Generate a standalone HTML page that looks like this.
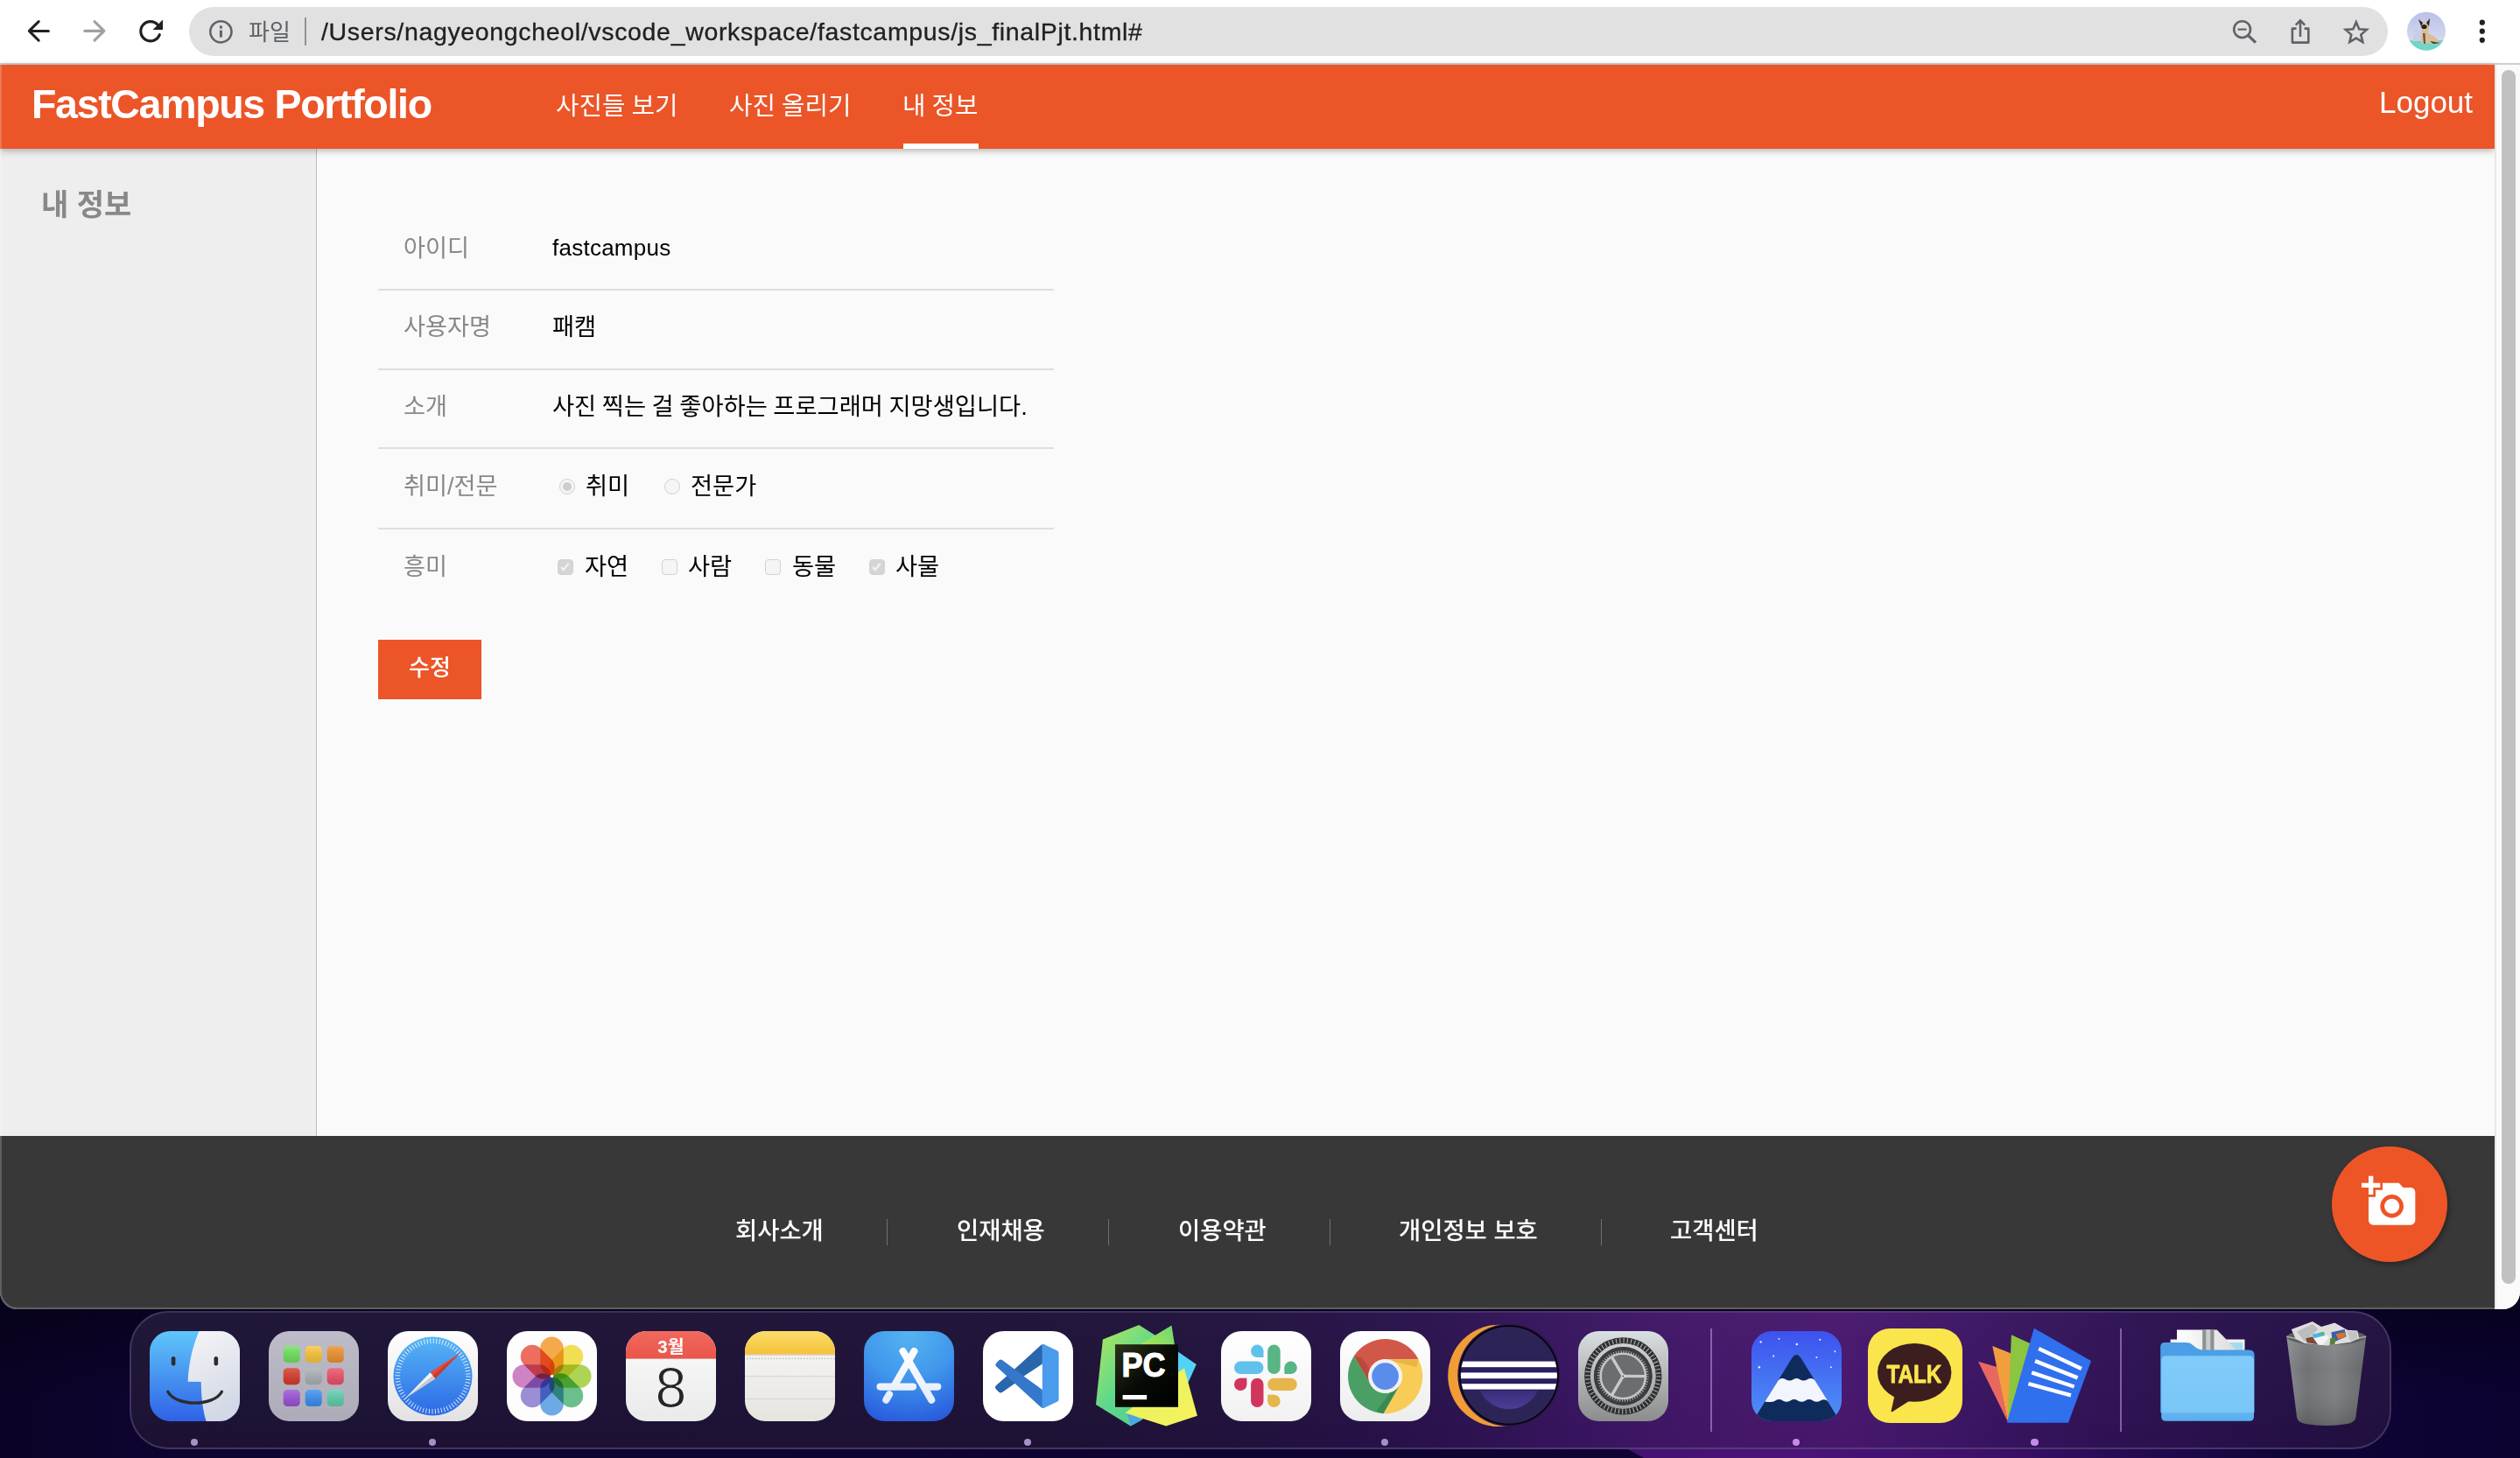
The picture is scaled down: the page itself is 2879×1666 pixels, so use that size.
<!DOCTYPE html>
<html lang="ko">
<head>
<meta charset="utf-8">
<title>FastCampus Portfolio</title>
<style>
*{box-sizing:border-box;margin:0;padding:0}
html,body{width:2879px;height:1666px;overflow:hidden}
body{position:relative;background:#0c0428;font-family:"Liberation Sans","Noto Sans CJK KR",sans-serif;color:#000}
.abs{position:absolute}
/* desktop */
#desk{left:0;top:0;width:2879px;height:1666px;
 background:
  linear-gradient(180deg,rgba(4,1,18,.55) 1496px,rgba(4,1,18,0) 1600px),
  linear-gradient(90deg,#0b0326 0%,#0e0430 6%,#0f0432 60%,#0e0436 93%,#0b0230 100%);}
#strip{left:1858px;top:1655px;width:760px;height:11px;background:linear-gradient(90deg,#45126f 0%,#4a1478 25%,#3c1068 55%,#1c0848 85%,rgba(14,4,54,0) 100%);clip-path:polygon(0 0,100% 0,100% 100%,20px 100%)}
/* window */
#win{left:0;top:0;width:2879px;height:1496px;background:#fff;border-radius:0 0 20px 20px;overflow:hidden}
#tb{left:0;top:0;width:2879px;height:74px;background:#fff;border-bottom:2px solid #cdd0d2}
#pill{left:216px;top:8px;width:2512px;height:56px;border-radius:28px;background:#e1e1e1}
#url{left:367px;top:8px;height:56px;line-height:56px;font-size:28.5px;color:#202124;white-space:nowrap;letter-spacing:0.66px;-webkit-text-stroke:.3px #202124}
#file{left:284px;top:8px;height:56px;line-height:59px;font-size:26px;color:#5f6368;white-space:nowrap}
#sep{left:348px;top:20px;width:2px;height:32px;background:#929292}
/* page */
#hdr{left:0;top:74px;width:2850px;height:96px;background:#eb5528;box-shadow:0 2px 8px rgba(0,0,0,.3);z-index:3}
#logo{left:36px;top:0;height:96px;line-height:90px;font-size:46.5px;letter-spacing:-1.32px;font-weight:700;color:#fff;white-space:nowrap}
.nav{top:0;height:96px;line-height:95px;font-size:28.8px;word-spacing:-1px;color:#fff;white-space:nowrap}
#ul{left:1032px;top:90px;width:86px;height:6px;background:#fff}
#logout{left:2718px;top:0;height:96px;line-height:86px;font-size:35px;color:#fff;white-space:nowrap}
#side{left:0;top:170px;width:362px;height:1128px;background:#eee;border-right:1px solid #bdbdbd}
#sidet{left:47px;top:211px;font-size:34px;font-weight:700;color:#888;white-space:nowrap;line-height:46px}
#main{left:362px;top:170px;width:2488px;height:1128px;background:#fafafa}
.row{left:432px;width:772px;height:2px;background:#dedede}
.lab{left:461px;font-size:27.2px;color:#888;white-space:nowrap;line-height:40px;height:40px}
.val{left:631px;font-size:27.3px;word-spacing:-1px;color:#000;white-space:nowrap;line-height:40px;height:40px}
.opt{font-size:27.3px;color:#000;white-space:nowrap;line-height:40px;height:40px}
.cb{width:18px;height:18px;border-radius:4px;border:1.5px solid #d2d2d2;background:#f5f5f5}
.cb.on{background:#d5d5d5;border-color:#d3d3d3}
.rd{width:18px;height:18px;border-radius:50%;border:1.5px solid #d0d0d0;background:#f5f5f5}
.rd.on::after{content:"";position:absolute;left:2.5px;top:2.5px;width:10px;height:10px;border-radius:50%;background:#cdcdcd}
#btn{left:432px;top:731px;width:118px;height:68px;background:#eb5528;color:#fff;font-size:26px;font-weight:500;text-align:center;line-height:64px}
#ftr{left:0;top:1298px;width:2850px;height:198px;background:#383838}
.fl{top:1387px;height:40px;line-height:40px;font-size:27.4px;font-weight:500;color:#fff;white-space:nowrap}
.fs{top:1393px;width:1px;height:30px;background:#707070}
#fab{left:2664px;top:1310px;width:132px;height:132px;border-radius:50%;background:#ee5526;box-shadow:2px 3px 6px rgba(0,0,0,.32)}
#sb{left:2850px;top:74px;width:29px;height:1422px;background:#fafafa;border-left:2px solid #e8e8e8;z-index:4}
#thumb{left:2858px;top:80px;width:16px;height:1387px;border-radius:8px;background:#c1c1c1;z-index:5}
#winb{left:0;top:74px;width:2879px;height:1422px;border-radius:0 0 20px 20px;border:2px solid rgba(255,255,255,.2);border-top:none;border-right:none;z-index:9;pointer-events:none}
/* dock */
#dock{left:148px;top:1498px;width:2584px;height:158px;border-radius:44px;border:2px solid rgba(112,102,142,.4);
 background:linear-gradient(180deg,rgba(255,255,255,.02),rgba(0,0,0,.03)),linear-gradient(90deg,#1d1235 0%,#1e1236 40%,#22123f 50%,#2b124f 58%,#391561 64%,#44176a 70%,#48186f 76%,#3b1564 82%,#2f1254 88%,#27114a 94%,#21103f 100%)}
.ic{top:1521px;width:103px;height:103px;border-radius:24px;overflow:hidden}
.dot{top:1644px;width:8px;height:8px;border-radius:50%;background:#a594c8}
.dsep{top:1518px;width:2px;height:118px;background:rgba(190,140,225,.6)}
</style>
</head>
<body>
<div id="desk" class="abs"></div><div id="strip" class="abs"></div>
<div id="win" class="abs">
 <div id="tb" class="abs"></div>
 <div id="pill" class="abs"></div>
 <div id="file" class="abs">파일</div>
 <div id="sep" class="abs"></div>
 <div id="url" class="abs">/Users/nagyeongcheol/vscode_workspace/fastcampus/js_finalPjt.html#</div>
 <svg class="abs" style="left:0;top:0" width="2879" height="73" viewBox="0 0 2879 73" fill="none">
  <g stroke="#1f2023" stroke-width="3" stroke-linecap="round" stroke-linejoin="round">
   <path d="M55.4 35.4H33.6M44.2 24.6L33.3 35.4L44.2 46.2"/>
  </g>
  <g stroke="#a0a0a0" stroke-width="3.1" stroke-linecap="round" stroke-linejoin="round">
   <path d="M96.8 35.4H118.6M108 24.6L118.9 35.4L108 46.2"/>
  </g>
  <path d="M180.4 28.6A11.1 11.1 0 1 0 182.3 39.6" stroke="#1f2023" stroke-width="3.1" stroke-linecap="round"/>
  <path d="M186 22.6V34H174.6Z" fill="#1f2023"/>
  <circle cx="252.4" cy="36.3" r="12.1" stroke="#5f6368" stroke-width="2.5"/>
  <rect x="250.9" y="34.6" width="3" height="8" fill="#5f6368"/>
  <rect x="250.9" y="29.4" width="3" height="3.2" fill="#5f6368"/>
  <g stroke="#5f6368" stroke-width="2.6" stroke-linecap="butt">
   <circle cx="2561.6" cy="33.6" r="9.4"/>
   <path d="M2568.6 40.6L2577 48.6" stroke-width="3.2"/>
   <path d="M2556.6 33.6H2566.6" stroke-width="2.2"/>
   <path d="M2623.6 32.6H2618.9V48.6H2637.3V32.6H2632.6" stroke-linejoin="round"/>
   <path d="M2628 42V24M2622.8 28.6L2628 23.4L2633.2 28.6" stroke-linejoin="miter"/>
   <path d="M2691.8 25.2L2695.2 33.2L2703.9 33.9L2697.3 39.6L2699.3 48.1L2691.8 43.6L2684.3 48.1L2686.3 39.6L2679.7 33.9L2688.4 33.2Z" stroke-linejoin="miter"/>
  </g>
  <circle cx="2835.8" cy="25.7" r="3.1" fill="#1f2023"/>
  <circle cx="2835.8" cy="35.7" r="3.1" fill="#1f2023"/>
  <circle cx="2835.8" cy="45.8" r="3.1" fill="#1f2023"/>
  <defs><clipPath id="avc"><circle cx="2772" cy="35.7" r="22"/></clipPath>
  <linearGradient id="avg" x1="0" y1="0" x2="0" y2="1"><stop offset="0" stop-color="#b9c0e6"/><stop offset="1" stop-color="#dfe3f4"/></linearGradient></defs>
  <g clip-path="url(#avc)">
   <rect x="2750" y="13" width="44" height="46" fill="url(#avg)"/>
   <rect x="2750" y="46" width="44" height="14" fill="#6fd6c8"/>
   <path d="M2756 47L2760 33L2766 38L2767 47Z" fill="#c9cde0"/>
   <path d="M2766 50L2767 30L2763 22L2768 26L2772 26L2776 21L2775 30L2774 38L2782 42L2788 49Z" fill="#d9bf98"/>
   <path d="M2763 22L2768 26L2766 30ZM2776 21L2772 26L2775 30Z" fill="#2a2320"/>
   <ellipse cx="2769.5" cy="30.5" rx="3.2" ry="2.6" fill="#2a2320"/>
   <path d="M2768 38L2769 50L2771 50L2770.5 38Z" fill="#6b5038"/>
   <path d="M2776 47L2788 49L2780 50Z" fill="#4a3528"/>
  </g>
 </svg>

 <div id="side" class="abs"></div>
 <div id="main" class="abs"></div>
 <div id="sidet" class="abs">내 정보</div>

 <div id="hdr" class="abs">
  <div id="logo" class="abs">FastCampus Portfolio</div>
  <div class="abs nav" style="left:635px">사진들 보기</div>
  <div class="abs nav" style="left:833px">사진 올리기</div>
  <div class="abs nav" style="left:1031px">내 정보</div>
  <div id="ul" class="abs"></div>
  <div id="logout" class="abs">Logout</div>
 </div>

 <!-- FORM -->
 <div class="abs lab" style="top:264px">아이디</div>
 <div class="abs val" style="top:263px;font-size:26px;letter-spacing:0.25px">fastcampus</div>
 <div class="abs row" style="top:330px"></div>
 <div class="abs lab" style="top:354px">사용자명</div>
 <div class="abs val" style="top:354px">패캠</div>
 <div class="abs row" style="top:421px"></div>
 <div class="abs lab" style="top:445px">소개</div>
 <div class="abs val" style="top:445px">사진 찍는 걸 좋아하는 프로그래머 지망생입니다.</div>
 <div class="abs row" style="top:511px"></div>
 <div class="abs lab" style="top:536px">취미/전문</div>
 <div class="abs rd on" style="left:639px;top:547px"></div>
 <div class="abs opt" style="left:669px;top:536px">취미</div>
 <div class="abs rd" style="left:759px;top:547px"></div>
 <div class="abs opt" style="left:789px;top:536px">전문가</div>
 <div class="abs row" style="top:603px"></div>
 <div class="abs lab" style="top:628px">흥미</div>
 <div class="abs cb on" style="left:637px;top:639px"><svg width="15" height="15" viewBox="0 0 15 15" style="display:block"><path d="M3 8.2L6 11L11.6 3.8" fill="none" stroke="#f2f2f2" stroke-width="2.4"/></svg></div>
 <div class="abs opt" style="left:668px;top:628px">자연</div>
 <div class="abs cb" style="left:756px;top:639px"></div>
 <div class="abs opt" style="left:786px;top:628px">사람</div>
 <div class="abs cb" style="left:874px;top:639px"></div>
 <div class="abs opt" style="left:905px;top:628px">동물</div>
 <div class="abs cb on" style="left:993px;top:639px"><svg width="15" height="15" viewBox="0 0 15 15" style="display:block"><path d="M3 8.2L6 11L11.6 3.8" fill="none" stroke="#f2f2f2" stroke-width="2.4"/></svg></div>
 <div class="abs opt" style="left:1023px;top:628px">사물</div>
 <div id="btn" class="abs">수정</div>

 <div id="ftr" class="abs"></div>
 <div class="abs fl" style="left:840px">회사소개</div>
 <div class="abs fs" style="left:1013px"></div>
 <div class="abs fl" style="left:1093px">인재채용</div>
 <div class="abs fs" style="left:1266px"></div>
 <div class="abs fl" style="left:1346px">이용약관</div>
 <div class="abs fs" style="left:1519px"></div>
 <div class="abs fl" style="left:1598px">개인정보 보호</div>
 <div class="abs fs" style="left:1829px"></div>
 <div class="abs fl" style="left:1908px">고객센터</div>
 <div id="fab" class="abs"><svg class="abs" style="left:33.6px;top:31.3px" width="64" height="64" viewBox="0 0 24 24"><path fill="#fff" d="M3 4V1h2v3h3v2H5v3H3V6H0V4h3zm3 6V7h3V4h7l1.83 2H21c1.1 0 2 .9 2 2v12c0 1.1-.9 2-2 2H5c-1.1 0-2-.9-2-2V10h3zm7 9c2.76 0 5-2.24 5-5s-2.24-5-5-5-5 2.24-5 5 2.24 5 5 5zm-3.2-5c0 1.77 1.43 3.2 3.2 3.2s3.2-1.43 3.2-3.2-1.43-3.2-3.2-3.2-3.2 1.43-3.2 3.2z"/></svg></div>
 <div id="sb" class="abs"></div>
 <div id="thumb" class="abs"></div>
 <div id="winb" class="abs"></div>
</div>

<div id="dock" class="abs"></div>
<!-- DOCK-START -->
<svg width="0" height="0" style="position:absolute"><defs><clipPath id="sq"><rect width="103" height="103" rx="23.5"/></clipPath></defs></svg>
<svg class="abs" style="left:170.6px;top:1520.5px" width="103" height="103" viewBox="0 0 103 103" ><defs><linearGradient id="fb" x1="0" y1="0" x2="0" y2="1"><stop offset="0" stop-color="#5fc6fb"/><stop offset="1" stop-color="#2f61e6"/></linearGradient>
<linearGradient id="fw" x1="0" y1="0" x2="0.3" y2="1"><stop offset="0" stop-color="#f6f6f8"/><stop offset="1" stop-color="#d2d8e5"/></linearGradient></defs>
<g clip-path="url(#sq)"><rect width="103" height="103" fill="url(#fb)"/>
<path fill="url(#fw)" d="M56.5 0C49 17 44.5 37 43.6 57.8L58.8 58C58.6 75 61 92 64.6 103H103V0Z"/>
<rect x="24.8" y="29" width="4.6" height="10.6" rx="2.3" fill="#2c2c30"/><rect x="73.5" y="29" width="4.6" height="10.6" rx="2.3" fill="#2c2c30"/>
<path d="M20.8 69.2C30 86.4 73 86.4 82.4 69.2" stroke="#2c2c30" stroke-width="3.3" fill="none" stroke-linecap="round"/></g></svg>
<svg class="abs" style="left:306.6px;top:1520.5px" width="103" height="103" viewBox="0 0 103 103" ><defs><linearGradient id="lp" x1="0" y1="0" x2="0" y2="1"><stop offset="0" stop-color="#bfbcc9"/><stop offset="1" stop-color="#aeabb9"/></linearGradient><linearGradient id="lsh" x1="0" y1="0" x2="0" y2="1"><stop offset="0" stop-color="#fff" stop-opacity=".18"/><stop offset="1" stop-color="#000" stop-opacity=".12"/></linearGradient></defs><rect width="103" height="103" rx="23.5" fill="url(#lp)"/><rect x="16.7" y="17.1" width="19" height="19" rx="4.6" fill="#6fe35d"/><rect x="16.7" y="17.1" width="19" height="19" rx="4.6" fill="url(#lsh)"/><rect x="41.7" y="17.1" width="19" height="19" rx="4.6" fill="#fcc63b"/><rect x="41.7" y="17.1" width="19" height="19" rx="4.6" fill="url(#lsh)"/><rect x="66.7" y="17.1" width="19" height="19" rx="4.6" fill="#f0912d"/><rect x="66.7" y="17.1" width="19" height="19" rx="4.6" fill="url(#lsh)"/><rect x="16.7" y="42.2" width="19" height="19" rx="4.6" fill="#d83a2a"/><rect x="16.7" y="42.2" width="19" height="19" rx="4.6" fill="url(#lsh)"/><rect x="41.7" y="42.2" width="19" height="19" rx="4.6" fill="#aab1b6"/><rect x="41.7" y="42.2" width="19" height="19" rx="4.6" fill="url(#lsh)"/><rect x="66.7" y="42.2" width="19" height="19" rx="4.6" fill="#ef4f69"/><rect x="66.7" y="42.2" width="19" height="19" rx="4.6" fill="url(#lsh)"/><rect x="16.7" y="67.1" width="19" height="19" rx="4.6" fill="#9c50d9"/><rect x="16.7" y="67.1" width="19" height="19" rx="4.6" fill="url(#lsh)"/><rect x="41.7" y="67.1" width="19" height="19" rx="4.6" fill="#3a8ff3"/><rect x="41.7" y="67.1" width="19" height="19" rx="4.6" fill="url(#lsh)"/><rect x="66.7" y="67.1" width="19" height="19" rx="4.6" fill="#5ecfae"/><rect x="66.7" y="67.1" width="19" height="19" rx="4.6" fill="url(#lsh)"/></svg>
<svg class="abs" style="left:442.8px;top:1520.5px" width="103" height="103" viewBox="0 0 103 103" ><defs><linearGradient id="sw" x1="0" y1="0" x2="0" y2="1"><stop offset="0" stop-color="#fff"/><stop offset="1" stop-color="#e2e2e2"/></linearGradient>
<linearGradient id="sbl" x1="0" y1="0" x2="0" y2="1"><stop offset="0" stop-color="#56b6f6"/><stop offset="1" stop-color="#2c68e5"/></linearGradient></defs>
<rect width="103" height="103" rx="23.5" fill="url(#sw)"/><circle cx="51.5" cy="51.5" r="45" fill="url(#sbl)"/>
<circle cx="51.5" cy="51.5" r="40.2" fill="none" stroke="#fff" stroke-opacity=".9" stroke-width="5.6" stroke-dasharray="0.9 2.608"/>
<path d="M82.5 25L54.4 54.3L48.5 47.2Z" fill="#e8473a"/><path d="M20.3 76.6L48.5 47.2L54.4 54.3Z" fill="#f4f4f4"/><path d="M20.3 76.6L51.4 50.8L54.4 54.3Z" fill="#c9c9c9"/><path d="M82.5 25L51.4 50.8L54.4 54.3Z" fill="#c83a30"/></svg>
<svg class="abs" style="left:578.7px;top:1520.5px" width="103" height="103" viewBox="0 0 103 103" ><rect width="103" height="103" rx="23.5" fill="#fdfdfd"/><g style="mix-blend-mode:multiply"><rect x="38.2" y="6.5" width="26.6" height="44" rx="13.3" fill="#f5a033" fill-opacity=".88" transform="rotate(0 51.5 51.5)" style="mix-blend-mode:multiply"/><rect x="38.2" y="6.5" width="26.6" height="44" rx="13.3" fill="#f2dc3c" fill-opacity=".88" transform="rotate(45 51.5 51.5)" style="mix-blend-mode:multiply"/><rect x="38.2" y="6.5" width="26.6" height="44" rx="13.3" fill="#a5d040" fill-opacity=".88" transform="rotate(90 51.5 51.5)" style="mix-blend-mode:multiply"/><rect x="38.2" y="6.5" width="26.6" height="44" rx="13.3" fill="#57b87d" fill-opacity=".88" transform="rotate(135 51.5 51.5)" style="mix-blend-mode:multiply"/><rect x="38.2" y="6.5" width="26.6" height="44" rx="13.3" fill="#5a9fe3" fill-opacity=".88" transform="rotate(180 51.5 51.5)" style="mix-blend-mode:multiply"/><rect x="38.2" y="6.5" width="26.6" height="44" rx="13.3" fill="#8f80d2" fill-opacity=".88" transform="rotate(225 51.5 51.5)" style="mix-blend-mode:multiply"/><rect x="38.2" y="6.5" width="26.6" height="44" rx="13.3" fill="#c873be" fill-opacity=".88" transform="rotate(270 51.5 51.5)" style="mix-blend-mode:multiply"/><rect x="38.2" y="6.5" width="26.6" height="44" rx="13.3" fill="#ea5b4c" fill-opacity=".88" transform="rotate(315 51.5 51.5)" style="mix-blend-mode:multiply"/></g><circle cx="51.5" cy="51.5" r="1.6" fill="#fff"/></svg>
<svg class="abs" style="left:714.9px;top:1520.5px" width="103" height="103" viewBox="0 0 103 103" ><defs><linearGradient id="cw" x1="0" y1="0" x2="0" y2="1"><stop offset="0" stop-color="#fbfbfb"/><stop offset="1" stop-color="#eaeaea"/></linearGradient>
<linearGradient id="cr" x1="0" y1="0" x2="0" y2="1"><stop offset="0" stop-color="#f1695d"/><stop offset="1" stop-color="#e9554b"/></linearGradient></defs>
<g clip-path="url(#sq)"><rect width="103" height="103" fill="url(#cw)"/><rect width="103" height="31.6" fill="url(#cr)"/></g>
<text x="51.5" y="25.2" text-anchor="middle" font-family="'Liberation Sans','Noto Sans CJK KR',sans-serif" font-weight="700" font-size="20.5" fill="#fff">3월</text>
<text x="51.5" y="86.8" text-anchor="middle" font-family="'Liberation Sans','Noto Sans CJK KR',sans-serif" font-size="64.5" fill="#262626" stroke="#f2f2f2" stroke-width="1.1">8</text></svg>
<svg class="abs" style="left:850.7px;top:1520.5px" width="103" height="103" viewBox="0 0 103 103" ><defs><linearGradient id="ny" x1="0" y1="0" x2="0" y2="1"><stop offset="0" stop-color="#fbdd6c"/><stop offset="1" stop-color="#f6c137"/></linearGradient>
<linearGradient id="nw" x1="0" y1="0" x2="0" y2="1"><stop offset="0" stop-color="#f9f8f6"/><stop offset="1" stop-color="#e6e4df"/></linearGradient></defs>
<g clip-path="url(#sq)"><rect width="103" height="103" fill="url(#nw)"/><rect width="103" height="26.3" fill="url(#ny)"/><rect y="26.3" width="103" height="1.4" fill="#c8b98a" fill-opacity=".7"/><rect x="2.00" y="30.6" width="1.2" height="1.6" fill="#b9b7b4"/><rect x="5.43" y="30.6" width="1.2" height="1.6" fill="#b9b7b4"/><rect x="8.86" y="30.6" width="1.2" height="1.6" fill="#b9b7b4"/><rect x="12.29" y="30.6" width="1.2" height="1.6" fill="#b9b7b4"/><rect x="15.72" y="30.6" width="1.2" height="1.6" fill="#b9b7b4"/><rect x="19.15" y="30.6" width="1.2" height="1.6" fill="#b9b7b4"/><rect x="22.58" y="30.6" width="1.2" height="1.6" fill="#b9b7b4"/><rect x="26.01" y="30.6" width="1.2" height="1.6" fill="#b9b7b4"/><rect x="29.44" y="30.6" width="1.2" height="1.6" fill="#b9b7b4"/><rect x="32.87" y="30.6" width="1.2" height="1.6" fill="#b9b7b4"/><rect x="36.30" y="30.6" width="1.2" height="1.6" fill="#b9b7b4"/><rect x="39.73" y="30.6" width="1.2" height="1.6" fill="#b9b7b4"/><rect x="43.16" y="30.6" width="1.2" height="1.6" fill="#b9b7b4"/><rect x="46.59" y="30.6" width="1.2" height="1.6" fill="#b9b7b4"/><rect x="50.02" y="30.6" width="1.2" height="1.6" fill="#b9b7b4"/><rect x="53.45" y="30.6" width="1.2" height="1.6" fill="#b9b7b4"/><rect x="56.88" y="30.6" width="1.2" height="1.6" fill="#b9b7b4"/><rect x="60.31" y="30.6" width="1.2" height="1.6" fill="#b9b7b4"/><rect x="63.74" y="30.6" width="1.2" height="1.6" fill="#b9b7b4"/><rect x="67.17" y="30.6" width="1.2" height="1.6" fill="#b9b7b4"/><rect x="70.60" y="30.6" width="1.2" height="1.6" fill="#b9b7b4"/><rect x="74.03" y="30.6" width="1.2" height="1.6" fill="#b9b7b4"/><rect x="77.46" y="30.6" width="1.2" height="1.6" fill="#b9b7b4"/><rect x="80.89" y="30.6" width="1.2" height="1.6" fill="#b9b7b4"/><rect x="84.32" y="30.6" width="1.2" height="1.6" fill="#b9b7b4"/><rect x="87.75" y="30.6" width="1.2" height="1.6" fill="#b9b7b4"/><rect x="91.18" y="30.6" width="1.2" height="1.6" fill="#b9b7b4"/><rect x="94.61" y="30.6" width="1.2" height="1.6" fill="#b9b7b4"/><rect x="98.04" y="30.6" width="1.2" height="1.6" fill="#b9b7b4"/><rect x="101.47" y="30.6" width="1.2" height="1.6" fill="#b9b7b4"/>
<rect y="51.2" width="103" height="1.1" fill="#d5d3dc"/><rect y="77" width="103" height="1.1" fill="#d5d3dc"/></g></svg>
<svg class="abs" style="left:987px;top:1520.5px" width="103" height="103" viewBox="0 0 103 103" ><defs><radialGradient id="ab" cx=".5" cy="0" r="1.05"><stop offset="0" stop-color="#55b5f1"/><stop offset=".5" stop-color="#4097ec"/><stop offset="1" stop-color="#2859dd"/></radialGradient>
<linearGradient id="aw" gradientUnits="userSpaceOnUse" x1="0" y1="20" x2="0" y2="82"><stop offset="0" stop-color="#fff"/><stop offset="1" stop-color="#e3ecfb"/></linearGradient></defs>
<rect width="103" height="103" rx="23.5" fill="url(#ab)"/>
<g stroke="url(#aw)" stroke-width="8.2" stroke-linecap="round" fill="none"><path d="M44.6 23L77.2 78.6"/><path d="M72.5 63.6H84.2"/><path d="M57.4 23L34.2 63.2"/><path d="M18.6 63.6H56"/><path d="M29 72.2L25.4 78.6"/></g></svg>
<svg class="abs" style="left:1122.8px;top:1520.5px" width="103" height="103" viewBox="0 0 103 103" ><rect width="103" height="103" rx="23.5" fill="#fff"/>
<path d="M67.6 16.4L21.6 68.8Q19.6 70.8 17.6 68.8L14.9 66.1Q13.1 64.1 15.1 62.1L67.6 16.4V37.6L36 52L67.6 16.4Z" fill="#2a67ad"/>
<path d="M66.5 15.8Q68.5 14.8 70.5 15.8L67.6 38L21.9 70.1Q19.9 71.3 18.1 69.5L14.9 66.3Q13.3 64.3 15.3 62.5Z" fill="#2a66ac"/>
<path d="M15.3 40.5Q13.3 38.7 14.9 36.9L18.1 33.5Q19.9 31.9 21.9 33.1L67.6 66.8L70.5 87.2Q68.5 88.2 66.5 87.2Z" fill="#3578cb"/>
<path d="M67.6 15.2Q69 14.6 70.6 15.4L84.6 22.2Q86.6 23.2 86.6 25.6V77.4Q86.6 79.8 84.6 80.8L70.6 87.6Q69 88.4 67.6 87.8Z" fill="#4a9beb"/>
<path d="M67.6 37.8L46.6 51.5L67.6 66.6Z" fill="#fff"/></svg>
<svg class="abs" style="left:1251px;top:1513px" width="118" height="118" viewBox="0 0 118 118" ><defs><linearGradient id="pg1" x1="0" y1="0" x2="1" y2="1"><stop offset="0" stop-color="#b6e85a"/><stop offset=".45" stop-color="#5fd88c"/><stop offset="1" stop-color="#4fc38f"/></linearGradient>
<linearGradient id="pg2" x1="0" y1="1" x2="1" y2="0"><stop offset="0" stop-color="#cdea4c"/><stop offset="1" stop-color="#67d873"/></linearGradient>
<linearGradient id="pg3" x1="0" y1="0" x2="1" y2="1"><stop offset="0" stop-color="#e6f25c"/><stop offset="1" stop-color="#f6f25e"/></linearGradient>
<linearGradient id="pk" x1="0" y1="0" x2="1" y2="1"><stop offset="0" stop-color="#2b3218"/><stop offset=".5" stop-color="#070a05"/><stop offset="1" stop-color="#000"/></linearGradient></defs>
<path d="M8.9 17.4L50.2 1L70 13.4L95 40L95 70L53.4 109.4L40.7 116.6L1 92Z" fill="url(#pg1)"/>
<path d="M50 24L87.5 1.5L91 24L97 60L60 60Z" fill="url(#pg2)"/>
<path d="M94 31L115.8 46L106.6 66.6L94 62Z" fill="#52d3f6"/>
<path d="M40.7 116.6L53.4 109.4L36 100Z" fill="#4aa7e0"/>
<path d="M102 50.5L116.9 104.7L81.2 116.6L34.5 101.5L95 55Z" fill="url(#pg3)"/>
<rect x="23" y="23.2" width="72" height="71.6" fill="url(#pk)"/>
<text x="30.6" y="59.6" font-family="'Liberation Sans',sans-serif" font-weight="700" font-size="38" fill="#fff" stroke="#fff" stroke-width="1.1" textLength="50" lengthAdjust="spacingAndGlyphs">PC</text>
<rect x="31.6" y="81" width="27.6" height="5.2" fill="#fff"/></svg>
<svg class="abs" style="left:1394.9px;top:1520.5px" width="103" height="103" viewBox="0 0 103 103" ><defs><linearGradient id="slw" x1="0" y1="0" x2="0" y2="1"><stop offset="0" stop-color="#fff"/><stop offset="1" stop-color="#f1f1f1"/></linearGradient></defs><rect width="103" height="103" rx="23.5" fill="url(#slw)"/><rect x="34.1" y="15.6" width="14.4" height="14.4" rx="7.2" fill="#5fc1ec"/><rect x="41.300000000000004" y="22.8" width="7.2" height="7.2" fill="#5fc1ec"/><rect x="15" y="34.6" width="33.5" height="14.4" rx="7.2" fill="#5fc1ec"/><rect x="53.2" y="15.6" width="14.5" height="33.4" rx="7.25" fill="#58b584"/><rect x="72.4" y="34.6" width="14.4" height="14.4" rx="7.2" fill="#58b584"/><rect x="72.4" y="41.800000000000004" width="7.2" height="7.2" fill="#58b584"/><rect x="15" y="53.7" width="14.4" height="14.4" rx="7.2" fill="#d1355d"/><rect x="22.2" y="53.7" width="7.2" height="7.2" fill="#d1355d"/><rect x="34.1" y="53.7" width="14.4" height="33.4" rx="7.2" fill="#d1355d"/><rect x="53.2" y="53.7" width="33.6" height="14.4" rx="7.2" fill="#e6b54b"/><rect x="53.2" y="72.7" width="14.4" height="14.4" rx="7.2" fill="#e6b54b"/><rect x="53.2" y="72.7" width="7.2" height="7.2" fill="#e6b54b"/></svg>
<svg class="abs" style="left:1530.7px;top:1520.5px" width="103" height="103" viewBox="0 0 103 103" ><defs><linearGradient id="chw" x1="0" y1="0" x2="0" y2="1"><stop offset="0" stop-color="#fff"/><stop offset="1" stop-color="#ededed"/></linearGradient>
<linearGradient id="chs1" x1="0" y1="0" x2="1" y2="0"><stop offset="0" stop-color="#000" stop-opacity=".22"/><stop offset="1" stop-color="#000" stop-opacity="0"/></linearGradient></defs>
<rect width="103" height="103" rx="23.5" fill="url(#chw)"/>
<path d="M51.60 32.20L89.53 32.20A42.6 42.6 0 0 0 15.84 28.45L34.80 61.30A19.4 19.4 0 0 1 51.60 32.20Z" fill="#d15849"/><path d="M68.40 61.30L49.44 94.15A42.6 42.6 0 0 0 89.53 32.20L51.60 32.20A19.4 19.4 0 0 1 68.40 61.30Z" fill="#f8cc56"/><path d="M34.80 61.30L15.84 28.45A42.6 42.6 0 0 0 49.44 94.15L68.40 61.30A19.4 19.4 0 0 1 34.80 61.30Z" fill="#4aa064"/>
<path d="M34.80 61.30L15.84 28.45L24.84 30.45L41.80 55.30Z" fill="#8a2f22" fill-opacity=".35"/>
<path d="M51.60 32.20L89.53 32.20L87.53 41.20L63.60 35.20Z" fill="#c98a1e" fill-opacity=".32"/>
<path d="M68.40 61.30L49.44 94.15L41.44 91.15L60.40 66.30Z" fill="#1f5c33" fill-opacity=".35"/>
<circle cx="51.6" cy="51.6" r="19.4" fill="#f1f1f1"/><circle cx="51.6" cy="51.6" r="15.3" fill="#5a8cec"/></svg>
<svg class="abs" style="left:1653px;top:1513px" width="130" height="118" viewBox="0 0 130 118" ><defs><clipPath id="ecl"><circle cx="70.9" cy="58.3" r="55"/></clipPath>
<linearGradient id="elo" x1="0" y1="0" x2="0" y2="1"><stop offset="0" stop-color="#3a2d7a"/><stop offset="1" stop-color="#4d3d96"/></linearGradient></defs>
<circle cx="59.4" cy="58.9" r="58.2" fill="#f09d37"/>
<circle cx="70.9" cy="58.3" r="58.6" fill="#2a154e"/>
<circle cx="70.9" cy="58.3" r="56.2" fill="#2c2457" stroke="#050308" stroke-width="1.6"/>
<g clip-path="url(#ecl)"><path d="M37.8 76A36.5 36.5 0 0 0 104 76Z" fill="url(#elo)"/>
<rect x="10" y="40" width="125" height="36" fill="#2a1f60"/>
<rect x="10" y="42.6" width="125" height="6.6" fill="#fff"/><rect x="10" y="55.4" width="125" height="6.8" fill="#fff"/><rect x="10" y="68.2" width="125" height="6.4" fill="#fff"/></g></svg>
<svg class="abs" style="left:1802.9px;top:1520.5px" width="103" height="103" viewBox="0 0 103 103" ><defs><linearGradient id="spb" x1="0" y1="0" x2="0" y2="1"><stop offset="0" stop-color="#dadfe2"/><stop offset="1" stop-color="#8c8c8c"/></linearGradient>
<linearGradient id="spr" x1="0" y1="0" x2="0" y2="1"><stop offset="0" stop-color="#cfd0d1"/><stop offset="1" stop-color="#9fa0a1"/></linearGradient></defs>
<rect width="103" height="103" rx="23.5" fill="url(#spb)"/>
<circle cx="51.3" cy="51.4" r="44.2" fill="#2f3032"/><circle cx="51.3" cy="51.4" r="40.5" fill="none" stroke="#b4b5b6" stroke-width="5.6" stroke-dasharray="1.05 3.19"/>
<circle cx="51.3" cy="51.4" r="35.4" fill="none" stroke="url(#spr)" stroke-width="4.2"/>
<circle cx="51.3" cy="51.4" r="33.2" fill="#3c3d3f"/><circle cx="51.3" cy="51.4" r="27.6" fill="none" stroke="#a9aaab" stroke-width="3.6" stroke-dasharray="1.1 1.79"/>
<circle cx="51.3" cy="51.4" r="24.4" fill="#6c6d6e"/><circle cx="51.3" cy="51.4" r="25.6" fill="none" stroke="#c4c5c6" stroke-width="2.6"/>
<g stroke="#c9cacb" stroke-width="3.4" stroke-linecap="butt"><path d="M51.3 51.4L38.4 29.6"/><path d="M51.3 51.4L76.6 51.6"/><path d="M51.3 51.4L38.4 73.4"/></g><circle cx="51.3" cy="51.4" r="2.4" fill="#d5d6d7"/><circle cx="51.3" cy="51.4" r="1" fill="#555"/></svg>
<svg class="abs" style="left:2000.6px;top:1520.5px" width="103" height="103" viewBox="0 0 103 103" ><defs><linearGradient id="mb" x1="0" y1="0" x2="0" y2="1"><stop offset="0" stop-color="#3c52ee"/><stop offset="1" stop-color="#4f92f7"/></linearGradient></defs>
<g clip-path="url(#sq)"><rect width="103" height="103" fill="url(#mb)"/><circle cx="10.6" cy="12.4" r="1.2" fill="#fff" fill-opacity=".9"/><circle cx="31.4" cy="8.8" r="1" fill="#fff" fill-opacity=".9"/><circle cx="51.8" cy="15" r="1.3" fill="#fff" fill-opacity=".9"/><circle cx="78.3" cy="9.8" r="1.1" fill="#fff" fill-opacity=".9"/><circle cx="95.4" cy="23.2" r="1" fill="#fff" fill-opacity=".9"/><circle cx="25.2" cy="28.6" r="1.1" fill="#fff" fill-opacity=".9"/><circle cx="74.4" cy="30" r="1" fill="#fff" fill-opacity=".9"/><circle cx="8.8" cy="41.2" r="1.2" fill="#fff" fill-opacity=".9"/><circle cx="90.8" cy="41.2" r="1" fill="#fff" fill-opacity=".9"/>
<path d="M46.6 30.2Q51.4 23.6 56.2 30.2L98 98V103H4.6V98Z" fill="#0f2b5b"/>
<path d="M30.6 56.2C33 53.4 36.4 53.4 39.2 55.2C42 57 45 57 47.8 55.2C50.2 53.6 52.8 53.6 55.2 55.2C58 57 61 57 63.8 55.2C66.6 53.4 70 53.4 72.4 56.2L87.6 80.4C85 77.6 81.6 77.6 78.8 79.4C76 81.2 73 81.2 70.2 79.4C67.4 77.6 64.4 77.6 61.6 79.4C58.8 81.2 55.8 81.2 53 79.4C50.2 77.6 47.2 77.6 44.4 79.4C41.6 81.2 38.6 81.2 35.8 79.4C33 77.6 30 77.6 27.2 79.4C24.4 81.2 19.6 81.4 15.4 80.4Z" fill="#f2f5fe"/></g></svg>
<svg class="abs" style="left:2134.3px;top:1518px" width="108" height="108" viewBox="0 0 108 108" ><rect width="108" height="108" rx="25" fill="#fae54d"/>
<ellipse cx="53.2" cy="50.4" rx="42.2" ry="33.4" fill="#3c1e1f"/><path d="M30.6 76L26.6 94.2Q26.4 96 28.2 95L47 83Z" fill="#3c1e1f"/>
<text x="21.6" y="62.2" font-family="'Liberation Sans',sans-serif" font-weight="700" font-size="29" fill="#fae54d" stroke="#fae54d" stroke-width=".9" stroke-linejoin="round" textLength="62.6" lengthAdjust="spacingAndGlyphs">TALK</text></svg>
<svg class="abs" style="left:2259px;top:1518px" width="130" height="108" viewBox="0 0 130 108" ><path d="M1.0 37.7L22.5 43.9L34.8 106.6Z" fill="#e8685f" /><path d="M17.3 20.0L39.6 28.9L39.6 68.3L34.8 106.6Z" fill="#f29e3f" /><path d="M38.9 7.3L60.7 17.2L56.3 68.3L34.8 106.6Z" fill="#8cc540" /><path d="M65.3 0.8L129.1 37.4L103.5 107.0L34.8 107.0Z" fill="#306fee" stroke="#306fee" stroke-width="1.5" stroke-linejoin="round"/><path d="M70.2 23.1L119.0 45.9" stroke="#fff" stroke-width="4.4"/><path d="M66.1 37.1L114.6 56.4" stroke="#fff" stroke-width="4.4"/><path d="M62.2 50.4L110.7 66.5" stroke="#fff" stroke-width="4.4"/><path d="M58.4 63.1L106.9 76.3" stroke="#fff" stroke-width="4.4"/></svg>
<svg class="abs" style="left:2466px;top:1516px" width="112" height="110" viewBox="0 0 112 110" ><defs><linearGradient id="fdp" x1="0" y1="0" x2="1" y2="0"><stop offset="0" stop-color="#fff"/><stop offset="1" stop-color="#dcdcdc"/></linearGradient>
<linearGradient id="fdf" x1="0" y1="0" x2="0" y2="1"><stop offset="0" stop-color="#80cbf9"/><stop offset=".86" stop-color="#79c6f7"/><stop offset=".88" stop-color="#62b3f0"/><stop offset="1" stop-color="#5aaeee"/></linearGradient></defs>
<path d="M13.6 14.4L98.5 14.4L98.5 37.3L13.6 37.3Z" fill="#f1f1f1"/>
<path d="M80.7 18.0L96.2 18.0L96.2 37.3L80.7 37.3Z" fill="#a4daf2"/>
<path d="M21.0 3.4L66.7 3.4L88.3 25.9L88.3 37.3L21.0 37.3Z" fill="url(#fdp)"/>
<path d="M50.2 3.4L63.5 3.4L63.5 37.3L50.2 37.3Z" fill="#8e9194"/><path d="M54.3 3.4L59.3 3.4L59.3 37.3L54.3 37.3Z" fill="#c9cdd0"/>
<path d="M2.2 23.3Q2.2 18.0 7.5 18.0L31.8 18.0Q36.2 18.0 40.0 21.4Q45.1 26.5 51.5 26.5L103.5 26.5Q109.6 26.5 109.6 32.8L109.6 98.2L2.2 98.2Z" fill="#4c9fe6"/>
<path d="M3.2 38.6Q3.2 33.2 8.5 33.2L103.7 33.2Q109.0 33.2 109.0 38.6L109.0 102.7Q109.0 107.8 103.7 107.8L8.5 107.8Q3.2 107.8 3.2 102.7Z" fill="url(#fdf)"/></svg>
<svg class="abs" style="left:2608px;top:1506px" width="100" height="126" viewBox="0 0 100 126" ><defs><linearGradient id="trb" x1="0" y1="0" x2="1" y2="0"><stop offset="0" stop-color="#85878a"/><stop offset=".25" stop-color="#6f7174"/><stop offset=".6" stop-color="#7d7f82"/><stop offset="1" stop-color="#65676a"/></linearGradient>
<linearGradient id="trv" x1="0" y1="0" x2="0" y2="1"><stop offset="0" stop-color="#fff" stop-opacity=".12"/><stop offset=".4" stop-color="#fff" stop-opacity="0"/><stop offset="1" stop-color="#000" stop-opacity=".18"/></linearGradient></defs>
<path d="M4.3 21.3Q49.8 11.8 95.2 21.3L83.4 113.4Q82.8 119.1 73.3 121.0Q49.8 124.8 26.3 121.0Q16.7 119.1 16.1 113.4Z" fill="url(#trb)"/>
<path d="M4.3 21.3Q49.8 11.8 95.2 21.3L83.4 113.4Q82.8 119.1 73.3 121.0Q49.8 124.8 26.3 121.0Q16.7 119.1 16.1 113.4Z" fill="url(#trv)"/>
<ellipse cx="49.8" cy="21.7" rx="45.5" ry="9.2" fill="#5d5f62"/>
<path d="M4.3 21.3Q49.8 32.1 95.2 21.3" fill="none" stroke="#a9abad" stroke-width="1.6"/>
<path d="M9.8 13.1L33.9 3.9L44.0 9.9L59.3 5.5L73.9 13.7L85.3 14.4L87.2 23.2L77.1 27.7L50.4 31.5L25.0 29.0L14.8 23.9Z" fill="#dedede"/>
<path d="M16.1 15.6L33.9 6.7L40.2 13.1L25.0 27.1Z" fill="#bdbdbd"/><path d="M73.3 15.0L84.7 15.6L85.3 23.2L77.1 26.4Z" fill="#c4c4c4"/>
<path d="M33.3 18.8L46.6 16.3L47.9 21.3L36.4 23.9Z" fill="#49b4e0"/><path d="M40.2 16.9L47.2 15.9L47.9 19.4Z" fill="#4fb560"/>
<path d="M55.5 16.3L70.7 13.1L72.6 21.3L56.7 28.3Z" fill="#3b5fa8"/><path d="M60.6 18.2L70.7 16.3L72.0 21.3L63.1 24.5Z" fill="#d8752a"/><path d="M54.2 23.2L60.6 22.6L59.3 30.2L53.6 30.9Z" fill="#58803a"/>
<path d="M26.3 23.2L33.9 21.3L40.2 30.2L27.5 28.3Z" fill="#7a4a3a"/>
<path d="M35.2 23.2L50.4 19.4L52.9 22.6L45.3 30.9L40.2 30.2Z" fill="#f4f4f4"/></svg>
<div class="abs dsep" style="left:1954px"></div><div class="abs dsep" style="left:2422px"></div>
<div class="abs dot" style="left:217.7px;top:1643.6px;width:8.6px;height:8.6px;background:#a392c6"></div>
<div class="abs dot" style="left:489.7px;top:1643.6px;width:8.6px;height:8.6px;background:#a392c6"></div>
<div class="abs dot" style="left:1169.7px;top:1643.6px;width:8.6px;height:8.6px;background:#a392c6"></div>
<div class="abs dot" style="left:1577.7px;top:1643.6px;width:8.6px;height:8.6px;background:#a392c6"></div>
<div class="abs dot" style="left:2047.7px;top:1643.6px;width:8.6px;height:8.6px;background:#c58be6"></div>
<div class="abs dot" style="left:2320.2px;top:1643.6px;width:8.6px;height:8.6px;background:#c58be6"></div>
<!-- DOCK-END -->
</body>
</html>
